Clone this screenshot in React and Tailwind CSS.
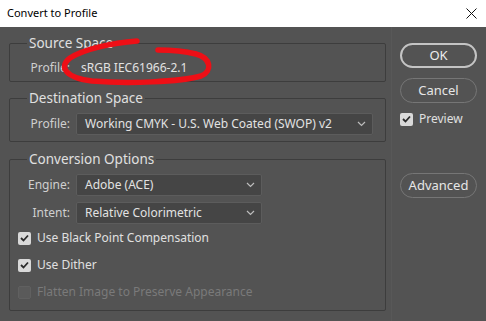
import React from "react";

const FONT = "font-['Noto_Sans',sans-serif]";

function Chevron() {
  return (
    <svg width="9" height="6" viewBox="0 0 9 6" className="shrink-0">
      <path d="M1 1 L4.5 4.5 L8 1" fill="none" stroke="#bdbdbd" strokeWidth="1.2" />
    </svg>
  );
}

function Select({ value, width }) {
  return (
    <div
      className={`${width} h-[22px] flex items-center justify-between pl-[8px] pr-[6px] bg-[#454545] border border-[#5c5c5c] rounded-[2px] text-[#e2e2e2]`}
    >
      <span className="whitespace-nowrap">{value}</span>
      <Chevron />
    </div>
  );
}

function Checkbox({ checked, disabled }) {
  if (disabled) {
    return <div className="w-[13px] h-[13px] rounded-[2px] bg-[#5a5a5a] border border-[#606060]" />;
  }
  return (
    <div className="w-[13px] h-[13px] rounded-[2px] bg-[#d9d9d9] flex items-center justify-center">
      {checked && (
        <svg width="9" height="8" viewBox="0 0 9 8">
          <path d="M1 4 L3.5 6.5 L8 1.5" fill="none" stroke="#2a2a2a" strokeWidth="1.8" />
        </svg>
      )}
    </div>
  );
}

function Group({ title, className, children }) {
  return (
    <div className={`relative border border-[#3d3d3d] rounded-[2px] ${className}`}>
      <span className="absolute left-[17px] top-[-10px] px-[2px] bg-[#535353] leading-[18px] text-[13.5px] text-[#e0e0e0]">
        {title}
      </span>
      {children}
    </div>
  );
}

function Row({ label, children }) {
  return (
    <div className="flex items-center">
      <span className="w-[66px] text-right pr-[6px] text-[#cfcfcf]">{label}</span>
      {children}
    </div>
  );
}

function CheckRow({ label, checked, disabled }) {
  return (
    <div className="h-[18px] flex items-center gap-[6px]">
      <Checkbox checked={checked} disabled={disabled} />
      <span className={disabled ? "text-[#7a7a7a]" : "text-[#e0e0e0]"}>{label}</span>
    </div>
  );
}

export default function App() {
  return (
    <div className={`w-[486px] h-[321px] ${FONT} text-[12px] select-none`}>
      <div className="h-[27px] bg-white flex items-center justify-between pl-[7px] pr-[9px] text-[11px] text-black">
        <span>Convert to Profile</span>
        <svg width="11" height="11" viewBox="0 0 11 11">
          <path d="M0.5 0.5 L10.5 10.5 M10.5 0.5 L0.5 10.5" stroke="#111" strokeWidth="1" />
        </svg>
      </div>

      <div className="relative h-[294px] bg-[#535353] flex">
        <div className="ml-[9px] w-[377px] flex flex-col">
          <Group title="Source Space" className="mt-[16px] h-[39px]">
            <div className="pt-[15px] h-full">
              <Row label="Profile:">
                <span className="ml-[5px] text-[#e2e2e2]">sRGB IEC61966-2.1</span>
              </Row>
            </div>
          </Group>

          <Group title="Destination Space" className="mt-[16px] h-[44px]">
            <div className="pt-[14px]">
              <Row label="Profile:">
                <Select value="Working CMYK - U.S. Web Coated (SWOP) v2" width="w-[297px]" />
              </Row>
            </div>
          </Group>

          <Group title="Conversion Options" className="mt-[17px] h-[152px]">
            <div className="pt-[14px] flex flex-col">
              <Row label="Engine:">
                <Select value="Adobe (ACE)" width="w-[186px]" />
              </Row>
              <div className="mt-[6px]">
                <Row label="Intent:">
                  <Select value="Relative Colorimetric" width="w-[186px]" />
                </Row>
              </div>
              <div className="mt-[5px] pl-[8px] flex flex-col gap-[9px]">
                <CheckRow label="Use Black Point Compensation" checked />
                <CheckRow label="Use Dither" checked />
                <CheckRow label="Flatten Image to Preserve Appearance" disabled />
              </div>
            </div>
          </Group>
        </div>

        <div className="ml-[5px] border-l border-[#585858] pl-[8px] flex flex-col pt-[16px]">
          <button className="w-[77px] h-[25px] rounded-full border-2 border-[#c4c4c4] text-[13px] text-[#ececec]">
            OK
          </button>
          <button className="mt-[10px] w-[77px] h-[25px] rounded-full border-[1.5px] border-[#767676] text-[13px] text-[#e6e6e6]">
            Cancel
          </button>
          <div className="mt-[7px] h-[18px] flex items-center gap-[6px]">
            <Checkbox checked />
            <span className="text-[#e0e0e0]">Preview</span>
          </div>
          <button className="mt-[45px] w-[77px] h-[25px] rounded-full border-[1.5px] border-[#767676] text-[13px] text-[#e6e6e6]">
            Advanced
          </button>
        </div>

        {/* red hand-drawn annotation */}
        <svg
          className="absolute left-0 top-[-27px] pointer-events-none"
          width="486"
          height="321"
          viewBox="0 0 486 321"
        >
          <path
            d="M137 41 C112 43 84 49 70 58 C58 67 66 78 92 81 C128 84 180 82 201 76 C213 71 211 58 196 54 C184 51 170 50 158 50"
            fill="none"
            stroke="#ee0f16"
            strokeWidth="5.5"
            strokeLinecap="round"
          />
        </svg>
      </div>
    </div>
  );
}
